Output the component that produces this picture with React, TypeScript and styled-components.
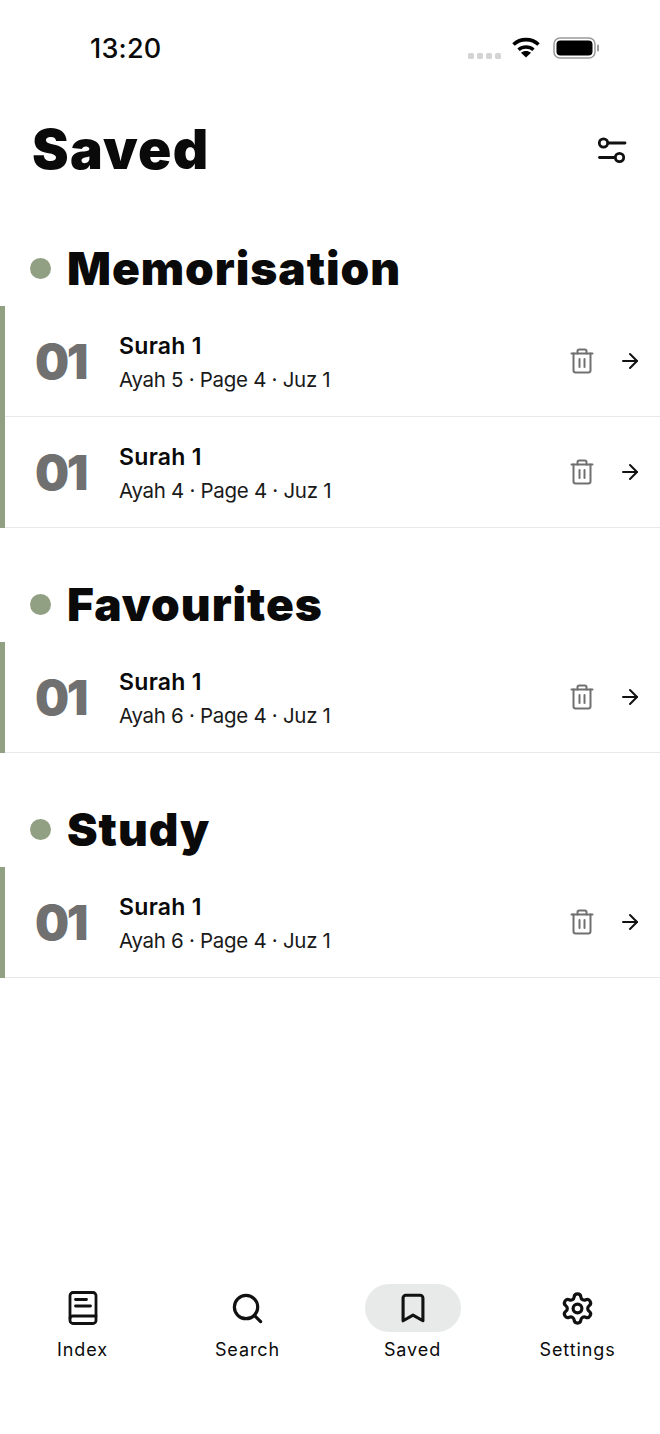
import React from "react";
import styled, { createGlobalStyle } from "styled-components";
import { ArrowRight, Bookmark, Search, Settings } from "lucide-react";

const GlobalStyle = createGlobalStyle`
  html, body { margin: 0; padding: 0; background: #fff; }
  * { box-sizing: border-box; }
`;

const Page = styled.div`
  width: 660px;
  height: 1434px;
  display: flex;
  flex-direction: column;
  background: #fff;
  font-family: Inter, "Liberation Sans", sans-serif;
  color: #0a0a0a;
`;

const StatusBar = styled.div`
  height: 96px;
  flex-shrink: 0;
  display: flex;
  justify-content: space-between;
  align-items: flex-start;
  padding: 32px 61px 0 90px;
`;

const Time = styled.div`
  font-size: 27px;
  line-height: 33px;
  font-weight: 500;
  letter-spacing: 0.2px;
`;

const StatusIcons = styled.div`
  display: flex;
  align-items: flex-start;
  margin-top: 6px;
`;

const Header = styled.div`
  height: 108px;
  flex-shrink: 0;
  display: flex;
  justify-content: space-between;
  align-items: center;
  padding: 0 33px 0 32px;
`;

const Title = styled.h1`
  margin: 0 0 2px;
  font-size: 55px;
  line-height: 64px;
  font-weight: 900;
  letter-spacing: 1.3px;
`;

const Main = styled.div`
  flex: 1;
  padding-top: 30px;
  display: flex;
  flex-direction: column;
  gap: 42px;
`;

const SectionHeading = styled.div`
  height: 72px;
  padding: 0 0 4px 30px;
  display: flex;
  align-items: center;
  gap: 16px;
`;

const Dot = styled.span`
  width: 21px;
  height: 21px;
  border-radius: 50%;
  background: #919f82;
`;

const SectionTitle = styled.h2`
  margin: 0;
  font-size: 46px;
  line-height: 56px;
  font-weight: 900;
  letter-spacing: 0.95px;
`;

const Row = styled.div`
  height: 111px;
  display: flex;
  align-items: center;
  border-left: 5px solid #919f82;
  position: relative;
  padding-right: 18px;
  &::after {
    content: "";
    position: absolute;
    left: 0;
    right: 0;
    bottom: 0;
    height: 1px;
    background: #e8e8e8;
  }
`;

const Num = styled.div`
  width: 114px;
  padding-left: 30px;
  font-size: 48px;
  line-height: 56px;
  font-weight: 900;
  color: #707070;
  letter-spacing: -2.5px;
`;

const Info = styled.div`
  flex: 1;
  display: flex;
  flex-direction: column;
  gap: 8px;
  margin-top: 3px;
`;

const Name = styled.div`
  font-size: 23px;
  line-height: 25px;
  font-weight: 600;
  letter-spacing: 0.3px;
`;

const Meta = styled.div`
  font-size: 20.5px;
  line-height: 25px;
  font-weight: 400;
  letter-spacing: -0.3px;
  color: #1a1a1a;
`;

const Actions = styled.div`
  display: flex;
  align-items: center;
  gap: 24px;
  margin-bottom: 2px;
`;

const TabBar = styled.div`
  height: 150px;
  flex-shrink: 0;
  display: grid;
  grid-template-columns: repeat(4, 165px);
  align-items: start;
`;

const Tab = styled.div`
  display: flex;
  flex-direction: column;
  align-items: center;
  gap: 6px;
`;

const TabIcon = styled.div<{ $active?: boolean }>`
  width: 96px;
  height: 48px;
  border-radius: 24px;
  display: flex;
  align-items: center;
  justify-content: center;
  background: ${({ $active }) => ($active ? "#e8eaea" : "transparent")};
`;

const TabLabel = styled.div`
  font-size: 18px;
  line-height: 24px;
  font-weight: 400;
  letter-spacing: 0.9px;
`;

const WifiIcon = () => (
  <svg width="30" height="22" viewBox="0 0 30 22" fill="none" stroke="#000" style={{ marginTop: -1 }}>
    <path d="M2.500 7.500C9.500 1 20.500 1 27.500 7.500" strokeWidth="3.600" />
    <path d="M7.500 12.800C11.800 9 18.200 9 22.500 12.800" strokeWidth="3.400" />
    <path d="M15 20.500L10 15.800C13 13.400 17 13.400 20 15.800Z" fill="#000" stroke="none" />
  </svg>
);

const SignalDots = () => (
  <svg width="34" height="8" viewBox="0 0 34 8" style={{ marginTop: 14, marginRight: 9 }}>
    {[0, 9, 18, 27].map((x) => (
      <rect key={x} x={x} y="1" width="6" height="6" rx="1.500" fill="#d4d4d4" />
    ))}
  </svg>
);

const BatteryIcon = () => (
  <svg width="46" height="22" viewBox="0 0 46 22" style={{ marginLeft: 12, marginTop: -1 }}>
    <rect x="1" y="1" width="41" height="20" rx="6" fill="none" stroke="#9a9a9a" strokeWidth="1.500" />
    <rect x="3.500" y="3.500" width="36" height="15" rx="4" fill="#000" />
    <rect x="44" y="7.500" width="2" height="7" rx="1" fill="#9a9a9a" />
  </svg>
);

const FilterIcon = () => (
  <svg width="30" height="30" viewBox="0 0 30 30" fill="none" stroke="#111" strokeWidth="2.800" strokeLinecap="round">
    <circle cx="6.500" cy="8" r="4.200" />
    <path d="M11 8h17" />
    <circle cx="22.500" cy="22.500" r="4.200" />
    <path d="M2.500 22.500H18" />
  </svg>
);

const TrashIcon = () => (
  <svg width="24" height="26" viewBox="0 0 24 26" fill="none" stroke="#707070" strokeWidth="2" strokeLinecap="round" strokeLinejoin="round">
    <path d="M1.500 5.500h21" />
    <path d="M7.500 5.500V3.200c0-1 .8-1.700 1.700-1.700h5.600c.9 0 1.700.7 1.700 1.700v2.300" />
    <path d="M3.500 5.500v16.800c0 1.200.9 2.200 2.200 2.200h12.600c1.300 0 2.200-1 2.200-2.200V5.500" />
    <path d="M9.500 11v8M14.500 11v8" />
  </svg>
);

const BookIcon = () => (
  <svg width="32" height="36" viewBox="0 0 32 36" fill="none" stroke="#111" strokeWidth="2.800" strokeLinecap="round" strokeLinejoin="round">
    <rect x="3" y="2.500" width="26" height="31" rx="3" />
    <path d="M3 28.500c0-1.500 1-2.500 3-2.500h23" />
    <path d="M8.500 9.500h11M8.500 16h15" />
  </svg>
);

const sections = [
  { title: "Memorisation", ayahs: [5, 4] },
  { title: "Favourites", ayahs: [6] },
  { title: "Study", ayahs: [6] },
];

const tabs = [
  { label: "Index", icon: <BookIcon /> },
  { label: "Search", icon: <Search size={35} strokeWidth={2.2} color="#111" /> },
  { label: "Saved", icon: <Bookmark size={34} strokeWidth={2.2} color="#111" />, active: true },
  { label: "Settings", icon: <Settings size={35} strokeWidth={2.2} color="#111" /> },
];

export default function App() {
  return (
    <Page>
      <GlobalStyle />
      <StatusBar>
        <Time>13:20</Time>
        <StatusIcons>
          <SignalDots />
          <WifiIcon />
          <BatteryIcon />
        </StatusIcons>
      </StatusBar>
      <Header>
        <Title>Saved</Title>
        <FilterIcon />
      </Header>
      <Main>
        {sections.map((s) => (
          <div key={s.title}>
            <SectionHeading>
              <Dot />
              <SectionTitle>{s.title}</SectionTitle>
            </SectionHeading>
            {s.ayahs.map((a) => (
              <Row key={a}>
                <Num>01</Num>
                <Info>
                  <Name>Surah 1</Name>
                  <Meta>Ayah {a} · Page 4 · Juz 1</Meta>
                </Info>
                <Actions>
                  <TrashIcon />
                  <ArrowRight size={24} strokeWidth={2} color="#111" />
                </Actions>
              </Row>
            ))}
          </div>
        ))}
      </Main>
      <TabBar>
        {tabs.map((t) => (
          <Tab key={t.label}>
            <TabIcon $active={t.active}>{t.icon}</TabIcon>
            <TabLabel>{t.label}</TabLabel>
          </Tab>
        ))}
      </TabBar>
    </Page>
  );
}
